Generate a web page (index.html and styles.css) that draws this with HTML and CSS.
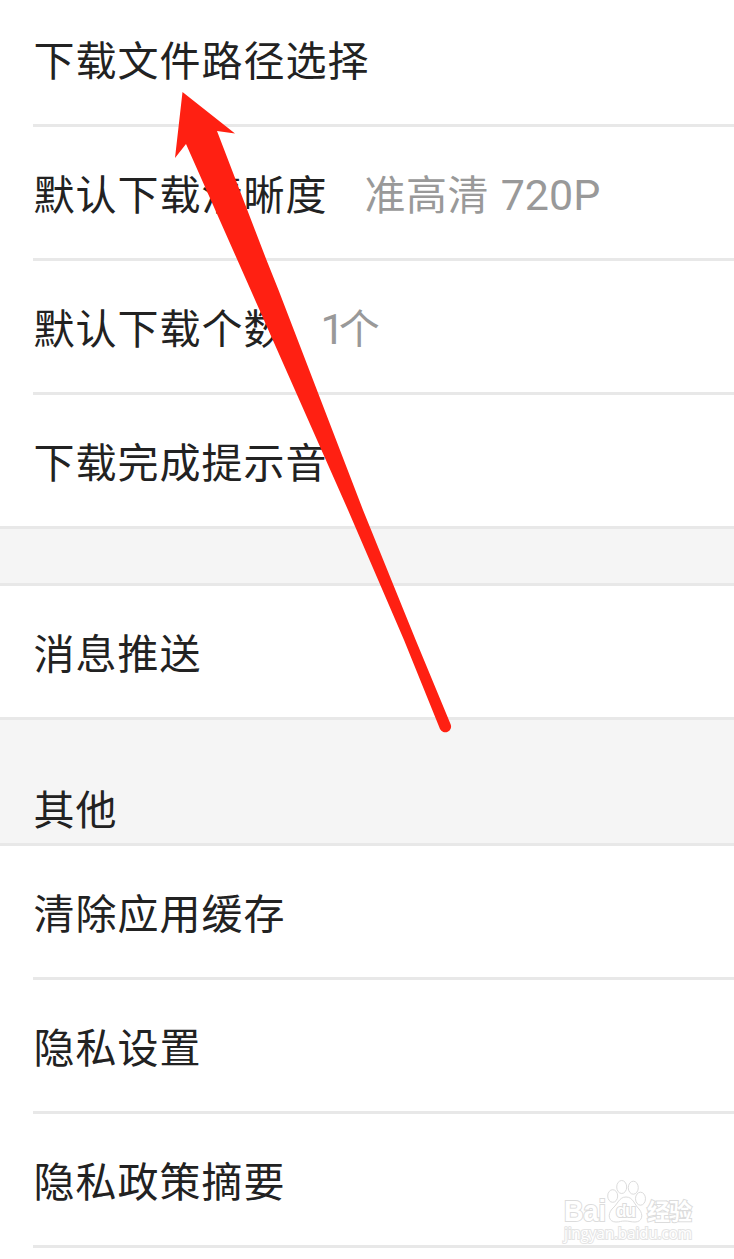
FILE: index.html
```html
<!DOCTYPE html>
<html lang="zh-CN">

<head>
    <meta charset="UTF-8">
    <meta name="viewport" content="width=device-width, initial-scale=1.0">
    <title>设置</title>
    <link rel="stylesheet" href="styles.css">
</head>

<body>
    <div class="page">
        <ul class="group first">
            <li class="row"><span>下载文件路径选择</span></li>
            <li class="row"><span>默认下载清晰度</span><span class="value">准高清 <span class="latin">720P</span></span></li>
            <li class="row"><span>默认下载个数</span><span class="value count"><span class="latin">1</span>个</span></li>
            <li class="row"><span>下载完成提示音</span></li>
        </ul>

        <div class="gap"></div>

        <ul class="group">
            <li class="row"><span>消息推送</span></li>
        </ul>

        <h2 class="group-title">其他</h2>

        <ul class="group">
            <li class="row"><span>清除应用缓存</span></li>
            <li class="row"><span>隐私设置</span></li>
            <li class="row inset"><span>隐私政策摘要</span></li>
        </ul>

        <svg class="arrow" width="734" height="1259" viewBox="0 0 734 1259">
            <path d="M182.500 92 L235 133.500 L217 131 L266.500 260 L278.500 290 L363 510 L415.700 640 L450.500 724 A5.500 5.500 0 0 1 440 729 L404 640 L348 510 L250.700 290 L186 144 L175 158 Z" />
        </svg>

        <svg class="watermark" width="140" height="70" viewBox="0 0 140 70">
            <g class="paw">
                <ellipse cx="51.700" cy="20" rx="5" ry="6.300" />
                <ellipse cx="60.700" cy="11" rx="5" ry="6.500" />
                <ellipse cx="72.300" cy="11.700" rx="5" ry="6.500" />
                <ellipse cx="79.500" cy="22.700" rx="5" ry="6.500" />
                <path d="M65 21 C72 21 73 28 78 33 C83 39 81 46 74 46 C70 46 68 45 64 45 C60 45 59 46 55 46 C48 46 46 39 51 33 C57 28 58 21 65 21 Z" />
            </g>
            <text class="brand" x="3" y="44.500" textLength="42" lengthAdjust="spacingAndGlyphs">Bai</text>
            <text class="du" x="55" y="41" textLength="20">du</text>
            <text class="brand cn" x="86" y="43.500" textLength="45">经验</text>
            <text class="site" x="3" y="62.500" textLength="128">jingyan.baidu.com</text>
        </svg>
    </div>
</body>

</html>
```

FILE: styles.css
```css
* {
    box-sizing: border-box;
}

body {
    margin: 0;
    font-family: "Noto Sans CJK SC", sans-serif;
    font-size: 41px;
    letter-spacing: 1px;
    color: #222;
    background-color: #fff;
}

.page {
    position: relative;
    height: 1259px;
    overflow: hidden;
}

.group {
    list-style: none;
    margin: 0;
    padding: 0;
    background: #fff;
}

.first {
    margin-top: -7px;
}

.row {
    display: flex;
    align-items: center;
    gap: 37px;
    height: 134px;
    margin-left: 33px;
    padding-left: 0.5px;
    padding-bottom: 2px;
    border-bottom: 3px solid #e8e8e8;
    line-height: 60px;
    white-space: nowrap;
}

/* la dernière ligne d'un groupe va d'un bord à l'autre */
.row:last-child:not(.inset) {
    margin-left: 0;
    padding-left: 33.5px;
}

.value {
    color: #999;
    letter-spacing: 0.5px;
}

.latin {
    margin-left: 2px;
    font-family: Roboto, sans-serif;
    font-size: 43px;
    line-height: 1;
    letter-spacing: 0;
}

.count {
    margin-left: -4px;
}

.count .latin {
    margin-right: -6px;
}

.gap {
    height: 57px;
    background: #f5f5f5;
    border-bottom: 3px solid #e8e8e8;
}

.group-title {
    display: flex;
    align-items: flex-end;
    height: 126px;
    margin: 0;
    padding: 0 0 6px 33.5px;
    font-size: 41px;
    font-weight: normal;
    background: #f5f5f5;
    border-bottom: 3px solid #e8e8e8;
}

.arrow {
    position: absolute;
    top: 0;
    left: 0;
    fill: #ff2012;
}

.watermark {
    position: absolute;
    left: 561px;
    top: 1176px;
    fill: #fff;
    stroke: #dcdcdc;
    stroke-width: 1;
    letter-spacing: 0;
}

.watermark text {
    paint-order: stroke;
    stroke-width: 2px;
}

.brand {
    font-family: "Liberation Sans", sans-serif;
    font-size: 29px;
    font-weight: bold;
}

.brand.cn {
    font-family: "Noto Sans CJK SC", sans-serif;
    font-size: 23px;
}

.du {
    font-family: "Liberation Sans", sans-serif;
    font-size: 18px;
    font-weight: bold;
}

.site {
    font-family: "Open Sans", sans-serif;
    font-size: 15.5px;
    stroke: #e4e4e4;
}
```
